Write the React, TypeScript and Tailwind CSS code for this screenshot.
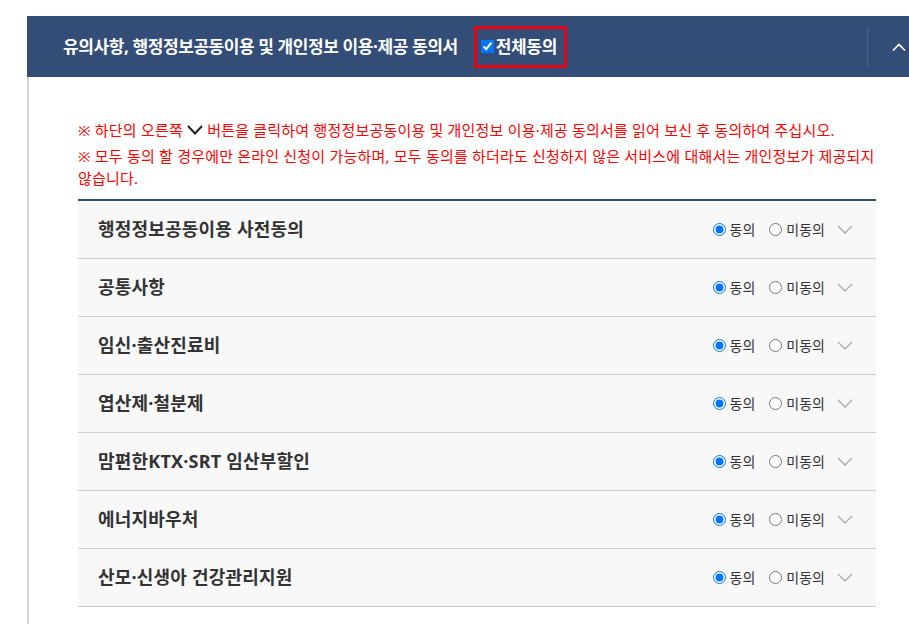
import React from "react";

const FONT = "font-['Noto_Sans','Noto_Sans_CJK_KR',sans-serif]";

const items = [
  "행정정보공동이용 사전동의",
  "공통사항",
  "임신·출산진료비",
  "엽산제·철분제",
  "맘편한KTX·SRT 임산부할인",
  "에너지바우처",
  "산모·신생아 건강관리지원",
];

function Chevron({ className }: { className?: string }) {
  return (
    <svg viewBox="0 0 16 9" className={className} fill="none">
      <path d="M1 1l7 7 7-7" stroke="currentColor" strokeWidth="1.3" />
    </svg>
  );
}

function ConsentRow({ title, idx }: { title: string; idx: number }) {
  return (
    <div className="flex h-[58px] items-center border-b border-[#cccccc] bg-[#f8f8f8] pl-[20px] pr-[23px]">
      <span className="flex-1 text-[18px] font-bold tracking-[0.2px] text-[#333]">{title}</span>
      <label className="flex items-center gap-[4px] text-[14px] text-[#333]">
        <input type="radio" name={`agree-${idx}`} defaultChecked className="m-0 h-[13px] w-[13px]" />
        동의
      </label>
      <label className="ml-[14px] flex items-center gap-[4px] text-[14px] text-[#333]">
        <input type="radio" name={`agree-${idx}`} className="m-0 h-[13px] w-[13px]" />
        미동의
      </label>
      <Chevron className="ml-[12px] h-[9px] w-[16px] text-[#aaa]" />
    </div>
  );
}

export default function App() {
  return (
    <div className={`h-[624px] w-[909px] overflow-hidden bg-white pt-[16px] ${FONT}`}>
      <div className="ml-[27px] w-[902px]">
        {/* Header */}
        <div className="flex h-[61px] items-center bg-[#344d77] pl-[36px]">
          <h2 className="text-[17px] font-bold tracking-[-0.4px] text-white">
            유의사항, 행정정보공동이용 및 개인정보 이용·제공 동의서
          </h2>
          <label className="ml-[16px] flex h-[42px] w-[93px] items-center border-[3px] border-[#e60012] pl-[4px]">
            <input type="checkbox" defaultChecked className="m-0 h-[13px] w-[13px]" />
            <span className="ml-[2px] text-[17px] font-bold tracking-[-0.3px] text-white">전체동의</span>
          </label>
          <div className="ml-auto flex h-[40px] w-[62px] items-center justify-center border-l border-[#4c6390]">
            <svg viewBox="0 0 14 8" className="h-[8px] w-[14px] text-white" fill="none">
              <path d="M1 7.5L7 1.5l6 6" stroke="currentColor" strokeWidth="1.6" />
            </svg>
          </div>
        </div>

        {/* Body */}
        <div className="border-l-2 border-[#d5d5d5] pb-[40px] pl-[49px] pt-[42px]">
          <div className="w-[798px] break-keep text-[15px] leading-[22px] tracking-[0.2px] text-[#ff0000]">
            <p>
              ※ 하단의 오른쪽{" "}
              <svg viewBox="0 0 16 10" className="inline h-[10px] w-[16px] align-[1px] text-[#222]" fill="none">
                <path d="M1 1l7 7.5L15 1" stroke="currentColor" strokeWidth="2" />
              </svg>{" "}
              버튼을 클릭하여 행정정보공동이용 및 개인정보 이용·제공 동의서를 읽어 보신 후 동의하여 주십시오.
            </p>
            <p className="mt-[4px]">
              ※ 모두 동의 할 경우에만 온라인 신청이 가능하며, 모두 동의를 하더라도 신청하지 않은 서비스에 대해서는 개인정보가 제공되지 않습니다.
            </p>
          </div>

          <div className="mt-[10px] w-[798px] border-t-2 border-[#344d77]">
            {items.map((t, i) => (
              <ConsentRow key={t} title={t} idx={i} />
            ))}
          </div>
        </div>
      </div>
    </div>
  );
}
